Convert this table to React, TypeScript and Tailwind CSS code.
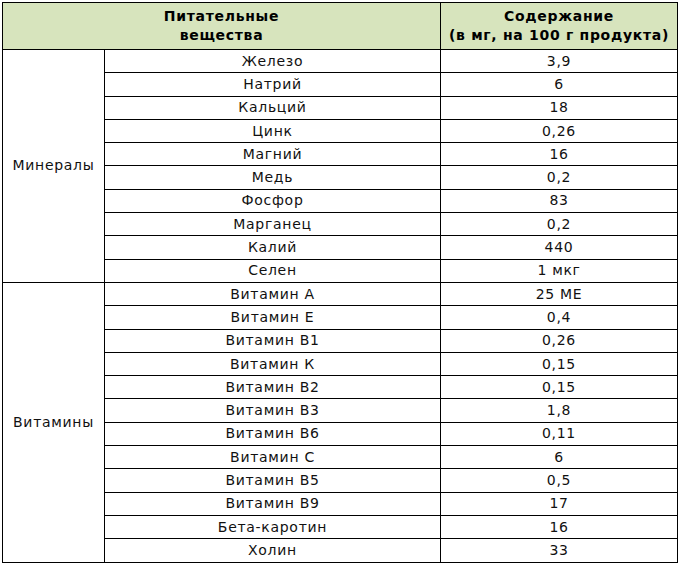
import React from "react";

const minerals = [
  ["Железо", "3,9"],
  ["Натрий", "6"],
  ["Кальций", "18"],
  ["Цинк", "0,26"],
  ["Магний", "16"],
  ["Медь", "0,2"],
  ["Фосфор", "83"],
  ["Марганец", "0,2"],
  ["Калий", "440"],
  ["Селен", "1 мкг"],
];

const vitamins = [
  ["Витамин А", "25 МЕ"],
  ["Витамин Е", "0,4"],
  ["Витамин В1", "0,26"],
  ["Витамин К", "0,15"],
  ["Витамин В2", "0,15"],
  ["Витамин В3", "1,8"],
  ["Витамин В6", "0,11"],
  ["Витамин С", "6"],
  ["Витамин В5", "0,5"],
  ["Витамин В9", "17"],
  ["Бета-каротин", "16"],
  ["Холин", "33"],
];

const groups = [
  { name: "Минералы", rows: minerals },
  { name: "Витамины", rows: vitamins },
];

const App = () => {
  return (
    <div className="w-[680px] h-[565px] bg-white pt-[2px] pl-[2px] font-['DejaVu_Sans',Verdana,sans-serif] text-[14px] tracking-[0.7px] text-[#111]">
      <table className="w-[675px] table-fixed border-collapse border border-black">
        <colgroup>
          <col className="w-[102px]" />
          <col className="w-[336px]" />
          <col className="w-[237px]" />
        </colgroup>
        <thead>
          <tr className="h-[47px] bg-[#d7e4bd]">
            <th colSpan={2} className="border border-black p-0 font-bold leading-[19px] text-black">
              Питательные
              <br />
              вещества
            </th>
            <th className="border border-black p-0 font-bold leading-[19px] text-black">
              Содержание
              <br />
              (в мг, на 100 г продукта)
            </th>
          </tr>
        </thead>
        <tbody>
          {groups.map((group) =>
            group.rows.map((row, i) => (
              <tr key={group.name + i} className="h-[23.3px]">
                {i === 0 && (
                  <td rowSpan={group.rows.length} className="border border-black p-0 text-center align-middle">
                    {group.name}
                  </td>
                )}
                <td className="border border-black p-0 text-center">{row[0]}</td>
                <td className="border border-black p-0 text-center">{row[1]}</td>
              </tr>
            ))
          )}
        </tbody>
      </table>
    </div>
  );
};

export default App;
